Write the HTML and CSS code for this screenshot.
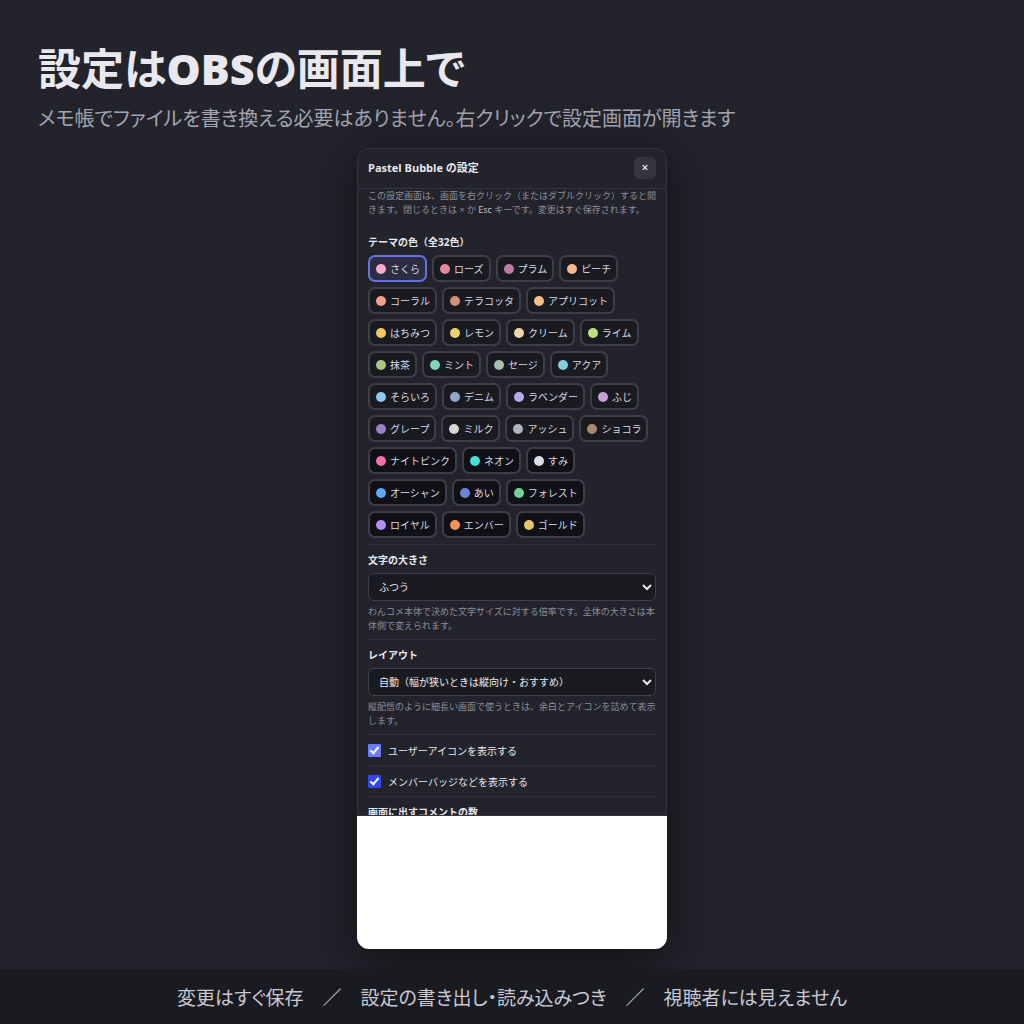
FILE: index.html
```html
<!DOCTYPE html>
<html lang="ja">
<head>
    <meta charset="utf-8">
    <title>Pastel Bubble の設定</title>
    <meta name="viewport" content="width=device-width, initial-scale=1.0">
    <link rel="stylesheet" href="styles.css">
</head>
<body>
    <header class="intro">
        <h1>設定は<span class="latin">OBS</span>の画面上で</h1>
        <p>メモ帳でファイルを書き換える必要はありません。右クリックで設定画面が開きます</p>
    </header>

    <main class="stage">
        <div class="frame">
            <div class="settings">
                <div class="settingsHeader">
                    <h2>Pastel Bubble の設定</h2>
                    <button class="closeButton" type="button" aria-label="閉じる">×</button>
                </div>

                <div class="settingsBody">
                    <p class="hint guide">この設定画面は、画面を右クリック（またはダブルクリック）すると開きます。閉じるときは × か <b>Esc</b> キーです。変更はすぐ保存されます。</p>

                    <!-- Theme colors -->
                    <section class="group">
                        <h3>テーマの色（全32色）</h3>
                        <div class="chips">
                            <button class="chip selected" style="--dot: #f5accb">さくら</button>
                            <button class="chip" style="--dot: #e58a9b">ローズ</button>
                            <button class="chip" style="--dot: #bd7ba3">プラム</button>
                            <button class="chip" style="--dot: #f7b98d">ピーチ</button>
                            <button class="chip" style="--dot: #f3a08c">コーラル</button>
                            <button class="chip" style="--dot: #cf9078">テラコッタ</button>
                            <button class="chip" style="--dot: #f5bf8b">アプリコット</button>
                            <button class="chip" style="--dot: #f2cb5e">はちみつ</button>
                            <button class="chip" style="--dot: #e8d46f">レモン</button>
                            <button class="chip" style="--dot: #ecd9aa">クリーム</button>
                            <button class="chip" style="--dot: #bfdf80">ライム</button>
                            <button class="chip" style="--dot: #a9c783">抹茶</button>
                            <button class="chip" style="--dot: #7fd9b8">ミント</button>
                            <button class="chip" style="--dot: #a3c0b0">セージ</button>
                            <button class="chip" style="--dot: #80cfdf">アクア</button>
                            <button class="chip" style="--dot: #8fc9f2">そらいろ</button>
                            <button class="chip" style="--dot: #8fa7cb">デニム</button>
                            <button class="chip" style="--dot: #b8a8ef">ラベンダー</button>
                            <button class="chip" style="--dot: #c99fd6">ふじ</button>
                            <button class="chip" style="--dot: #9c80c6">グレープ</button>
                            <button class="chip" style="--dot: #dad5ce">ミルク</button>
                            <button class="chip" style="--dot: #aeb4be">アッシュ</button>
                            <button class="chip" style="--dot: #ad8970">ショコラ</button>
                            <button class="chip night" style="--dot: #f070a8">ナイトピンク</button>
                            <button class="chip night" style="--dot: #43e0d8">ネオン</button>
                            <button class="chip night" style="--dot: #d9dee8">すみ</button>
                            <button class="chip night" style="--dot: #5fa9f0">オーシャン</button>
                            <button class="chip night" style="--dot: #6f84d6">あい</button>
                            <button class="chip night" style="--dot: #74d19b">フォレスト</button>
                            <button class="chip night" style="--dot: #b48cf2">ロイヤル</button>
                            <button class="chip night" style="--dot: #f29455">エンバー</button>
                            <button class="chip night" style="--dot: #e8c468">ゴールド</button>
                        </div>
                    </section>

                    <section class="group">
                        <h3><label for="fontScale">文字の大きさ</label></h3>
                        <select id="fontScale">
                            <option>ふつう</option>
                        </select>
                        <p class="hint">わんコメ本体で決めた文字サイズに対する倍率です。全体の大きさは本体側で変えられます。</p>
                    </section>

                    <section class="group">
                        <h3><label for="layout">レイアウト</label></h3>
                        <select id="layout">
                            <option>自動（幅が狭いときは縦向け・おすすめ）</option>
                        </select>
                        <p class="hint">縦配信のように細長い画面で使うときは、余白とアイコンを詰めて表示します。</p>
                    </section>

                    <label class="check active"><input type="checkbox" checked>ユーザーアイコンを表示する</label>
                    <label class="check"><input type="checkbox" checked>メンバーバッジなどを表示する</label>

                    <section class="group">
                        <h3>画面に出すコメントの数</h3>
                    </section>
                </div>
            </div>
            <div class="blank"></div>
        </div>
    </main>

    <footer class="summary">変更はすぐ保存　／　設定の書き出し・読み込みつき　／　視聴者には見えません</footer>
</body>
</html>
```

FILE: styles.css
```css
* {
    box-sizing: border-box;
}

body {
    display: flex;
    flex-direction: column;
    height: 100vh;
    margin: 0;
    overflow: hidden;
    background-color: #22232b;
    color: #e8e8ee;
    font-family: "Open Sans", "Noto Sans CJK JP", sans-serif;
}

h1, h2, h3, p {
    margin: 0;
}

.intro {
    padding: 36px 38px 0;
    font-family: "Noto Sans CJK JP", sans-serif;
    font-feature-settings: "palt";
}

.intro h1 {
    font-size: 43px;
    line-height: 60px;
    font-weight: 700;
}

.intro .latin {
    font-family: "Open Sans", sans-serif;
    font-weight: 800;
    line-height: 1;
}

.intro p {
    color: #a3a3b0;
    font-size: 20px;
    line-height: 44px;
}

.stage {
    flex: 1;
    display: flex;
    justify-content: center;
    min-height: 0;
    padding: 8px 0 20px;
}

.frame {
    display: flex;
    flex-direction: column;
    width: 310px;
    overflow: hidden;
    border-radius: 12px;
    box-shadow: 0 12px 48px rgba(0, 0, 0, 0.5);
}

.settings {
    flex: 5 1 0;
    display: flex;
    flex-direction: column;
    min-height: 0;
    border: 1px solid #34353e;
    border-radius: 12px 12px 0 0;
    background-color: #22232b;
}

.blank {
    flex: 1 1 0;
    background-color: #fff;
}

.settingsHeader {
    display: flex;
    justify-content: space-between;
    align-items: center;
    padding: 8px 10px 9px;
    border-bottom: 1px solid #34353e;
}

.settingsHeader h2 {
    font-size: 11px;
    line-height: 16px;
}

.closeButton {
    width: 22px;
    height: 22px;
    padding: 0 0 2px;
    border: none;
    border-radius: 5px;
    background-color: #34353e;
    color: #e8e8ee;
    font: 600 12px "Open Sans", sans-serif;
    cursor: pointer;
}

.settingsBody {
    flex: 1;
    min-height: 0;
    overflow: hidden;
    padding: 0 10px;
}

.hint {
    color: #8d8d99;
    font-size: 9px;
    line-height: 14px;
}

.hint b {
    color: #c8c8d0;
    font-weight: 500;
}

.guide {
    padding-bottom: 10px;
}

.group {
    padding: 7px 0 6px;
}

.group + .group,
.check,
.check + .group {
    border-top: 1px solid #2d2e37;
}

.group h3 {
    margin-bottom: 5px;
    font-size: 10px;
    line-height: 16px;
}

.chips {
    display: flex;
    flex-wrap: wrap;
    gap: 5px;
}

.chip {
    display: flex;
    align-items: center;
    gap: 4px;
    height: 27px;
    padding: 0 5px 0 6px;
    border: 2px solid #3d3e47;
    border-radius: 7px;
    background-color: #1a1b20;
    color: #d8d8e0;
    font-family: inherit;
    font-size: 10px;
    line-height: 16px;
    cursor: pointer;
}

.chip::before {
    content: "";
    width: 10px;
    height: 10px;
    border-radius: 50%;
    background-color: var(--dot);
}

.chip.night {
    background-color: #101117;
}

.chip.selected {
    border-color: #6673d9;
    background-color: #2c2d42;
}

select {
    display: block;
    width: 100%;
    height: 28px;
    margin-bottom: 4px;
    padding: 0 0 0 6px;
    border: 1px solid #3d3e47;
    border-radius: 6px;
    background-color: #1a1b20;
    color: #e8e8ee;
    font-family: inherit;
    font-size: 10px;
}

.check {
    display: flex;
    align-items: center;
    gap: 7px;
    height: 31px;
    font-size: 10px;
}

.check input {
    width: 13px;
    height: 13px;
    margin: 0;
    appearance: none;
    border-radius: 1px;
    background: #3347f0;
}

.check input:checked::before {
    content: "";
    display: block;
    width: 3px;
    height: 7px;
    margin: 1px 0 0 4px;
    border: solid #fff;
    border-width: 0 2px 2px 0;
    transform: rotate(40deg);
}

.check.active input {
    background: #6b7bff;
}

.summary {
    padding: 8px 20px 7px;
    background-color: #1a1b20;
    color: #c8c8d2;
    font-family: "Noto Sans CJK JP", sans-serif;
    font-feature-settings: "palt";
    font-size: 19px;
    line-height: 40px;
    text-align: center;
}
```
